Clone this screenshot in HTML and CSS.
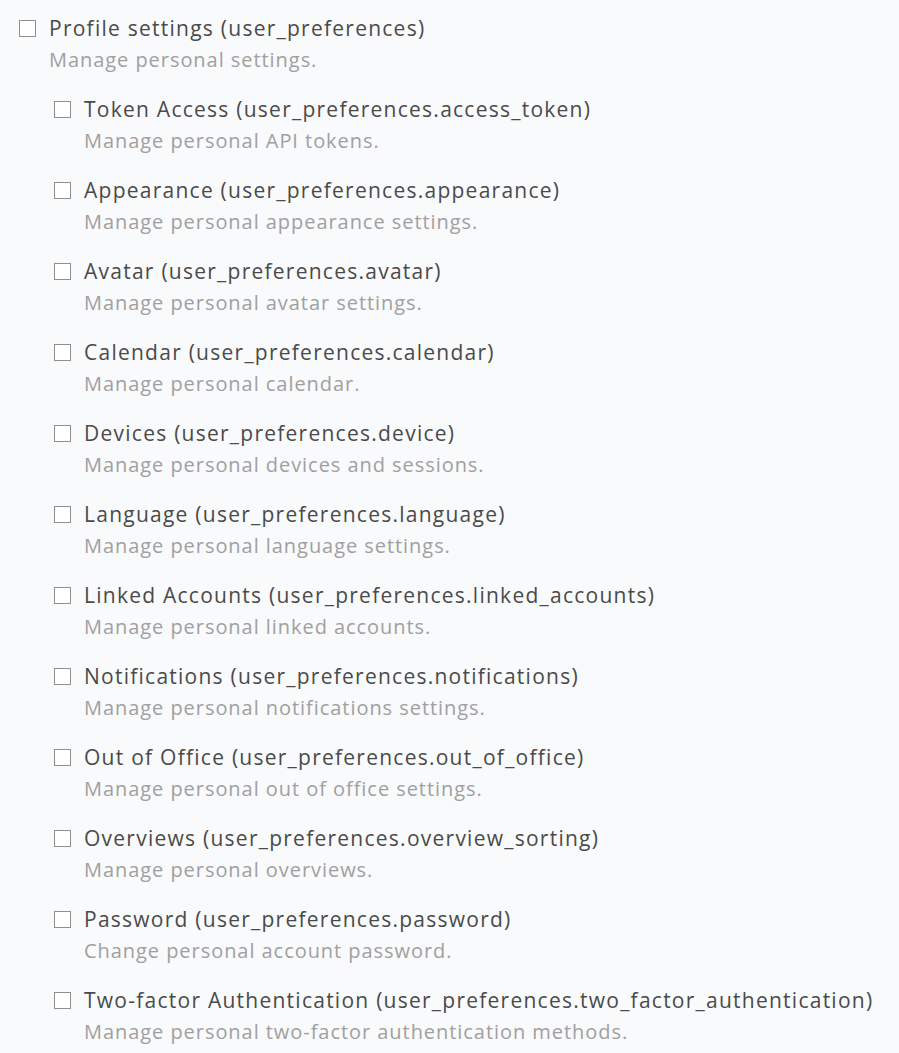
FILE: index.html
```html
<!DOCTYPE html>
<html lang="en">
<head>
<meta charset="utf-8">
<title>Profile settings</title>
<link rel="stylesheet" href="styles.css">
</head>
<body>
<div class="tree">
  <div class="item">
    <span class="box"></span>
    <div class="text">
      <div class="title">Profile settings (user_preferences)</div>
      <div class="desc">Manage personal settings.</div>
    </div>
  </div>
  <div class="children">
    <div class="item"><span class="box"></span><div class="text"><div class="title">Token Access (user_preferences.access_token)</div><div class="desc">Manage personal API tokens.</div></div></div>
    <div class="item"><span class="box"></span><div class="text"><div class="title">Appearance (user_preferences.appearance)</div><div class="desc">Manage personal appearance settings.</div></div></div>
    <div class="item"><span class="box"></span><div class="text"><div class="title">Avatar (user_preferences.avatar)</div><div class="desc">Manage personal avatar settings.</div></div></div>
    <div class="item"><span class="box"></span><div class="text"><div class="title">Calendar (user_preferences.calendar)</div><div class="desc">Manage personal calendar.</div></div></div>
    <div class="item"><span class="box"></span><div class="text"><div class="title">Devices (user_preferences.device)</div><div class="desc">Manage personal devices and sessions.</div></div></div>
    <div class="item"><span class="box"></span><div class="text"><div class="title">Language (user_preferences.language)</div><div class="desc">Manage personal language settings.</div></div></div>
    <div class="item"><span class="box"></span><div class="text"><div class="title">Linked Accounts (user_preferences.linked_accounts)</div><div class="desc">Manage personal linked accounts.</div></div></div>
    <div class="item"><span class="box"></span><div class="text"><div class="title">Notifications (user_preferences.notifications)</div><div class="desc">Manage personal notifications settings.</div></div></div>
    <div class="item"><span class="box"></span><div class="text"><div class="title">Out of Office (user_preferences.out_of_office)</div><div class="desc">Manage personal out of office settings.</div></div></div>
    <div class="item"><span class="box"></span><div class="text"><div class="title">Overviews (user_preferences.overview_sorting)</div><div class="desc">Manage personal overviews.</div></div></div>
    <div class="item"><span class="box"></span><div class="text"><div class="title">Password (user_preferences.password)</div><div class="desc">Change personal account password.</div></div></div>
    <div class="item"><span class="box"></span><div class="text"><div class="title">Two-factor Authentication (user_preferences.two_factor_authentication)</div><div class="desc">Manage personal two-factor authentication methods.</div></div></div>
  </div>
</div>
</body>
</html>
```

FILE: styles.css
```css
html, body {
  margin: 0;
  padding: 0;
  background: #f9fafb;
}
body {
  font-family: "Open Sans", "Noto Sans", sans-serif;
}
.tree {
  padding: 12px 0 0 19px;
  display: flex;
  flex-direction: column;
  gap: 17px;
}
.children {
  padding-left: 35px;
  display: flex;
  flex-direction: column;
  gap: 17px;
}
.item {
  display: flex;
  align-items: flex-start;
  gap: 13px;
}
.box {
  flex: none;
  width: 15px;
  height: 15px;
  margin-top: 8px;
  border: 1.5px solid #8f8f8f;
  background: #fff;
}
.title {
  font-size: 21px;
  line-height: 32px;
  letter-spacing: 1.25px;
  color: #4a4a4a;
  white-space: nowrap;
}
.desc {
  font-size: 20px;
  line-height: 32px;
  letter-spacing: 0.95px;
  color: #a0a0a0;
  white-space: nowrap;
}
```
